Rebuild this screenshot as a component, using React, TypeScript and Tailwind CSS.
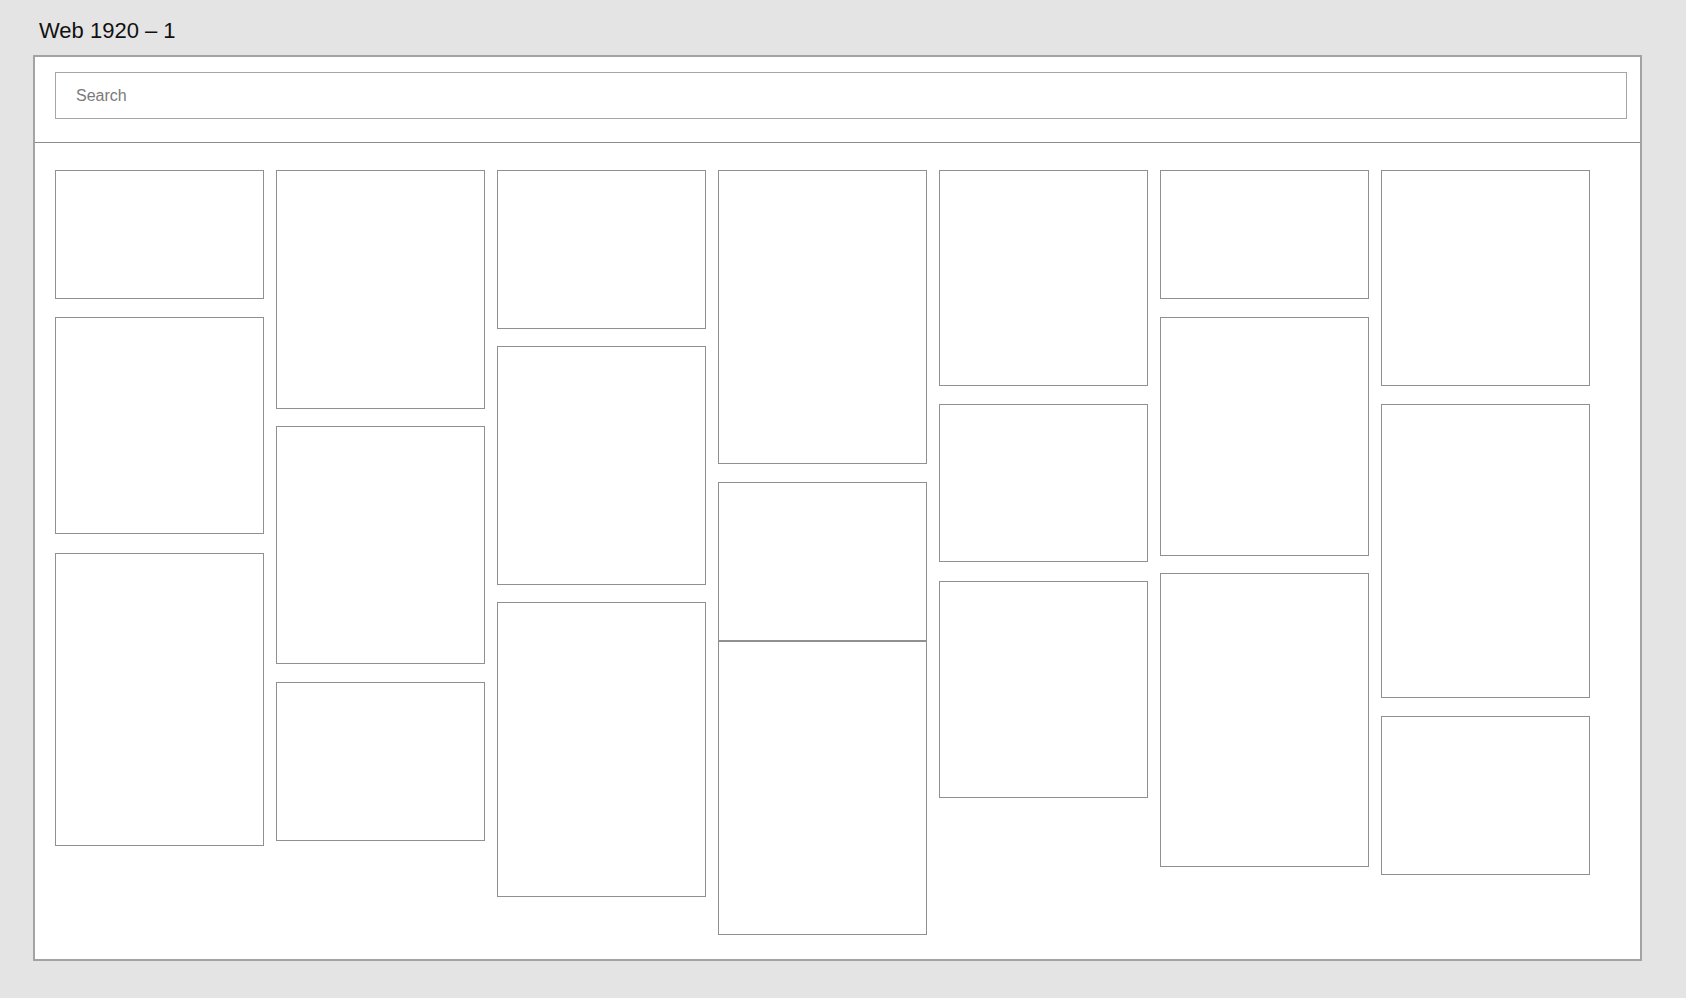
const columns: { h: number; gap: number }[][] = [
  [
    { h: 129, gap: 0 },
    { h: 217, gap: 18 },
    { h: 293, gap: 19 },
  ],
  [
    { h: 239, gap: 0 },
    { h: 238, gap: 17 },
    { h: 159, gap: 18 },
  ],
  [
    { h: 159, gap: 0 },
    { h: 239, gap: 17 },
    { h: 295, gap: 17 },
  ],
  [
    { h: 294, gap: 0 },
    { h: 159, gap: 18 },
    { h: 294, gap: 0 },
  ],
  [
    { h: 216, gap: 0 },
    { h: 158, gap: 18 },
    { h: 217, gap: 19 },
  ],
  [
    { h: 129, gap: 0 },
    { h: 239, gap: 18 },
    { h: 294, gap: 17 },
  ],
  [
    { h: 216, gap: 0 },
    { h: 294, gap: 18 },
    { h: 159, gap: 18 },
  ],
];

const App = () => {
  return (
    <div className="min-h-screen bg-[#e4e4e4] font-['Liberation_Sans',Arial,sans-serif]">
      <div className="h-[55px] pt-[18px] pl-[39px]">
        <h1 className="text-[22px] leading-[26px] text-[#111]">Web 1920 – 1</h1>
      </div>
      <div className="ml-[33px] w-[1609px] h-[906px] border-2 border-[#a3a3a3] bg-white">
        <div className="h-[86px] border-b border-[#8a8a8a] pt-[15px] pl-[20px]">
          <div className="w-[1572px] h-[47px] border border-[#a6a6a6] flex items-center pl-[20px]">
            <span className="text-[16px] text-[#7a7a7a]">Search</span>
          </div>
        </div>
        <div className="flex gap-[12px] pt-[27px] pl-[20px]">
          {columns.map((col, i) => (
            <div key={i} className="flex flex-col w-[209px]">
              {col.map((card, j) => (
                <div
                  key={j}
                  className="border border-[#909090] bg-white"
                  style={{ height: card.h, marginTop: card.gap }}
                />
              ))}
            </div>
          ))}
        </div>
      </div>
    </div>
  );
};

export default App;
